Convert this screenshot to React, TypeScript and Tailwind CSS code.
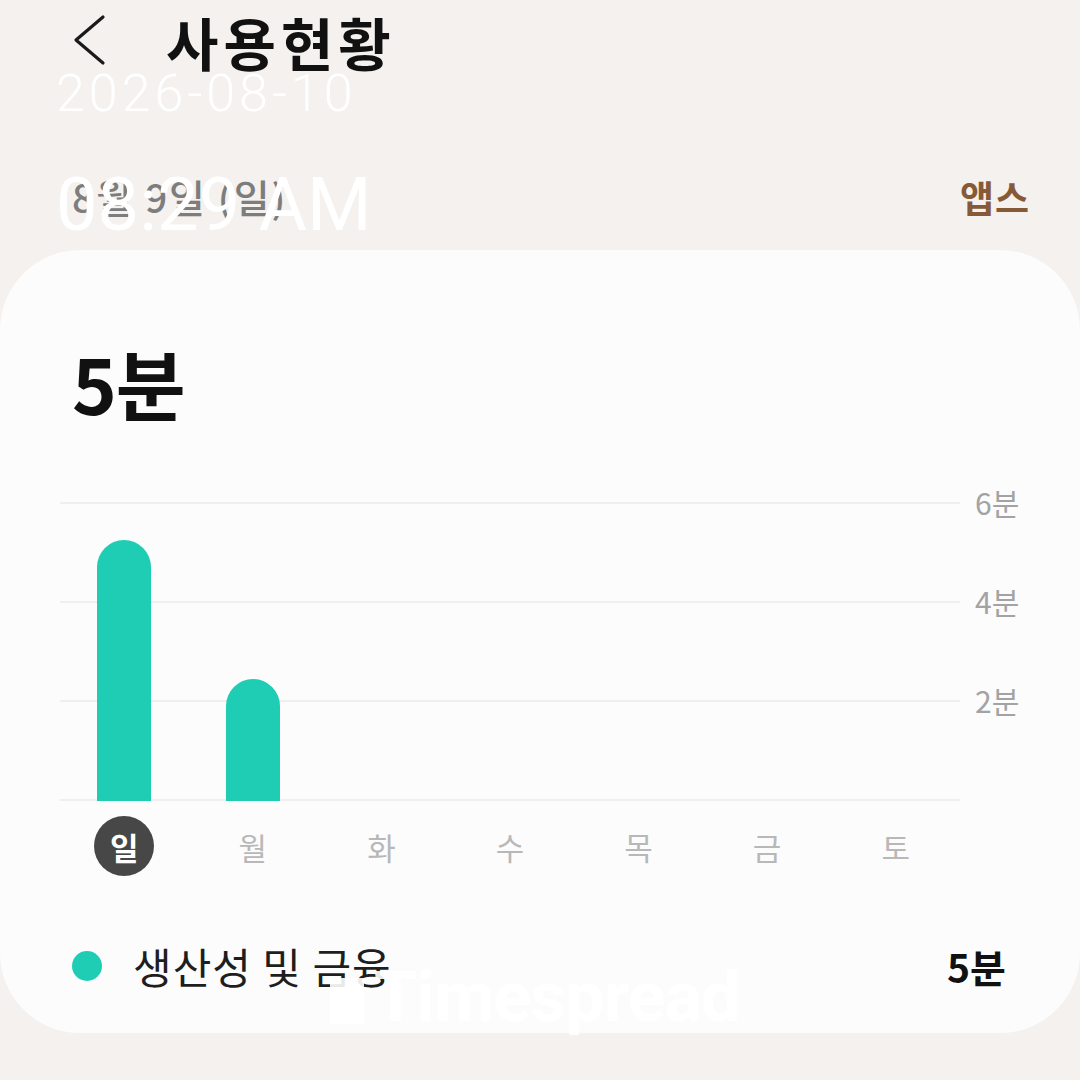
import React from "react"

const font = { fontFamily: '"Noto Sans CJK KR", "Noto Sans", sans-serif' }

const days = ["일", "월", "화", "수", "목", "금", "토"]
// minutes per day
const usage = [5.25, 2.45, 0, 0, 0, 0, 0]
const MAX = 6
const PLOT_H = 298

function ChevronLeft() {
  return (
    <svg width="40" height="56" viewBox="0 0 40 56" fill="none">
      <path d="M33 4 L6 27 L33 50" stroke="#1a1a1a" strokeWidth="3.2" strokeLinecap="round" strokeLinejoin="round" />
    </svg>
  )
}

function UsageChart() {
  return (
    <div className="flex pl-[60px]">
      <div className="w-[900px] flex flex-col">
        <div className="grid h-[300px]">
          {/* grid lines */}
          <div className="col-start-1 row-start-1 flex flex-col">
            {[0, 1, 2].map((i) => (
              <div key={i} className="h-[99px] border-t-2 border-[#f0efee]" />
            ))}
            <div className="border-t-2 border-[#f0efee]" />
          </div>
          {/* bars */}
          <div className="col-start-1 row-start-1 grid grid-cols-7 items-end pb-[1px]">
            {usage.map((m, i) => (
              <div key={i} className="flex justify-center">
                {m > 0 && (
                  <div
                    className="w-[54px] rounded-t-full bg-[#1fcdb5]"
                    style={{ height: (m / MAX) * PLOT_H }}
                  />
                )}
              </div>
            ))}
          </div>
        </div>
        <div className="grid grid-cols-7 mt-[14px]">
          {days.map((d, i) => (
            <div key={d} className="flex justify-center">
              {i === 0 ? (
                <div className="w-[60px] h-[60px] rounded-full bg-[#474747] flex items-center justify-center text-white text-[31px] font-bold leading-none">
                  {d}
                </div>
              ) : (
                <div className="h-[60px] flex items-center text-[31px] text-[#b8b8b8] leading-none">{d}</div>
              )}
            </div>
          ))}
        </div>
      </div>
      <div className="flex flex-col pl-[15px] text-[30px] text-[#a3a3a3] leading-none">
        {["6분", "4분", "2분"].map((l) => (
          <div key={l} className="h-[99px] -mt-[15px] mb-[15px]">{l}</div>
        ))}
      </div>
    </div>
  )
}

export default function App() {
  return (
    <div className="relative w-[1080px] h-[1080px] overflow-hidden bg-[#f4f1ee]" style={font}>
      {/* Header */}
      <div className="flex items-center h-[80px] pl-[70px] pt-[2px]">
        <ChevronLeft />
        <h1 className="ml-[56px] text-[57px] font-bold text-[#111] leading-none tracking-[5px]">사용현황</h1>
      </div>
      <div className="flex items-end justify-between h-[136px] pl-[72px] pr-[50px]">
        <span className="text-[39px] font-medium text-[#7d7d7d] leading-none tracking-[2px]">8월 9일 (일)</span>
        <span className="text-[37px] font-bold text-[#875a37] leading-none tracking-[1px]">앱스</span>
      </div>

      {/* Card */}
      <div className="mt-[34px] w-[1080px] h-[783px] rounded-[80px] bg-[#fcfcfc] pt-[94px]">
        <div className="pl-[72px] text-[76px] font-bold text-[#111] leading-none tracking-[-1px]">5분</div>
        <div className="mt-[82px]">
          <UsageChart />
        </div>
        <div className="mt-[69px] flex items-center justify-between pl-[72px] pr-[74px]">
          <div className="flex items-center">
            <div className="w-[30px] h-[30px] rounded-full bg-[#1fcdb5]" />
            <span className="ml-[31px] text-[42px] text-[#1e1e1e] leading-none tracking-[1px]">생산성 및 금융</span>
          </div>
          <span className="text-[39px] font-bold text-[#111] leading-none">5분</span>
        </div>
      </div>

      {/* Timestamp overlay */}
      <div className="absolute left-[56px] top-[68px] text-white" style={{ fontFamily: "Roboto, sans-serif" }}>
        <div className="text-[52px] font-light leading-none tracking-[4px]">2026-08-10</div>
        <div className="mt-[48px] text-[74px] leading-none">08:29 AM</div>
      </div>

      {/* Watermark */}
      <div className="absolute left-[330px] top-[962px] flex items-center gap-[10px] text-white/90" style={{ fontFamily: "Roboto, sans-serif" }}>
        <div className="w-[34px] h-[46px] bg-white/90 mt-[8px]" />
        <span className="text-[70px] font-bold leading-none tracking-[-1px]">Timespread</span>
      </div>
    </div>
  )
}
